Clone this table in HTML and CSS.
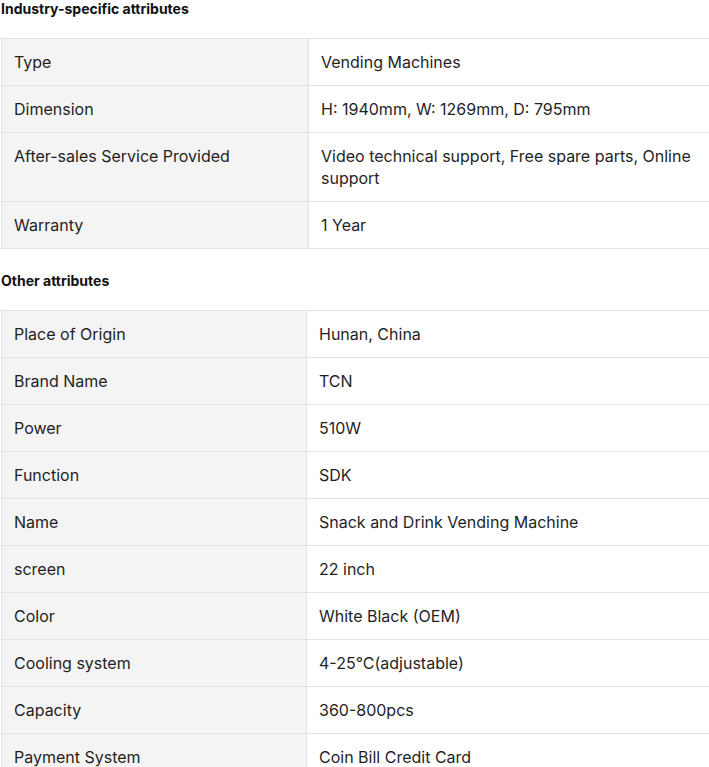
FILE: index.html
```html
<!DOCTYPE html>
<html>
<head>
<meta charset="utf-8">
<link rel="stylesheet" href="styles.css">
</head>
<body>
<div class="page">
  <h3 class="title">Industry-specific attributes</h3>
  <table class="attrs attrs-a">
    <colgroup><col class="c1a"><col></colgroup>
    <tr><td class="k">Type</td><td class="v">Vending Machines</td></tr>
    <tr><td class="k">Dimension</td><td class="v">H: 1940mm, W: 1269mm, D: 795mm</td></tr>
    <tr><td class="k">After-sales Service Provided</td><td class="v">Video technical support, Free spare parts, Online support</td></tr>
    <tr><td class="k">Warranty</td><td class="v">1 Year</td></tr>
  </table>
  <h3 class="title second">Other attributes</h3>
  <table class="attrs attrs-b">
    <colgroup><col class="c1b"><col></colgroup>
    <tr><td class="k">Place of Origin</td><td class="v">Hunan, China</td></tr>
    <tr><td class="k">Brand Name</td><td class="v">TCN</td></tr>
    <tr><td class="k">Power</td><td class="v">510W</td></tr>
    <tr><td class="k">Function</td><td class="v">SDK</td></tr>
    <tr><td class="k">Name</td><td class="v">Snack and Drink Vending Machine</td></tr>
    <tr><td class="k">screen</td><td class="v">22 inch</td></tr>
    <tr><td class="k">Color</td><td class="v">White Black (OEM)</td></tr>
    <tr><td class="k">Cooling system</td><td class="v">4-25°C(adjustable)</td></tr>
    <tr><td class="k">Capacity</td><td class="v">360-800pcs</td></tr>
    <tr><td class="k">Payment System</td><td class="v">Coin Bill Credit Card</td></tr>
  </table>
</div>
</body>
</html>
```
FILE: styles.css
```css
html, body {
  margin: 0;
  padding: 0;
  overflow: hidden;
  background: #fff;
}
body {
  font-family: Inter, "Noto Sans", sans-serif;
  color: #1f1f1f;
}
.page {
  width: 709px;
  overflow: hidden;
}
.title {
  margin: 0 0 20px 0;
  padding-left: 1px;
  font-size: 14px;
  line-height: 18px;
  font-weight: 700;
  color: #111;
}
.title.second {
  margin-top: 23px;
}
.attrs {
  margin-left: 1px;
  width: 740px;
  border-collapse: collapse;
  table-layout: fixed;
  font-size: 16px;
  line-height: 22px;
}
.c1a { width: 307px; }
.c1b { width: 305px; }
.attrs td {
  border: 1px solid #e2e2e2;
  padding: 12px;
  vertical-align: top;
}
.attrs td.k {
  background: #f4f4f4;
}
```
